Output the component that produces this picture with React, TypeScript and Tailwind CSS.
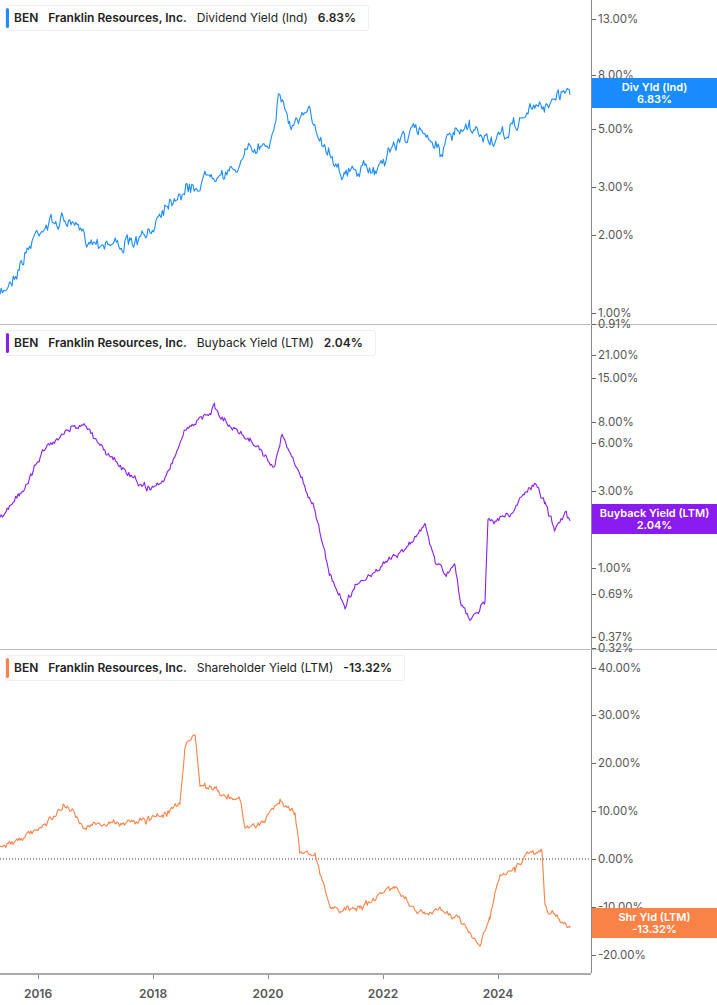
import React from "react";

type P = [number, number];
function rng(seed: number) {
  let s = seed;
  return () => {
    s = (s * 16807) % 2147483647;
    return s / 2147483647;
  };
}
function series(pts: P[], seed: number, amp: number, step: number) {
  const r = rng(seed);
  const out: string[] = [];
  let drift = 0;
  for (let i = 0; i < pts.length - 1; i++) {
    const [x0, y0] = pts[i];
    const [x1, y1] = pts[i + 1];
    for (let x = x0; x < x1; x += step) {
      const t = (x - x0) / (x1 - x0);
      drift = drift * 0.6 + (r() - 0.5) * amp;
      const j = (r() - 0.5) * amp * 0.6;
      out.push(`${x.toFixed(1)},${(y0 + (y1 - y0) * t + drift + j).toFixed(1)}`);
    }
  }
  const l = pts[pts.length - 1];
  out.push(`${l[0]},${l[1]}`);
  return out.join(" ");
}

const p1: P[] = [[0,297],[20,265],[38,230],[45,225],[65,220],[90,240],[130,245],[150,235],[160,210],[175,195],[200,185],[210,170],[230,175],[245,155],[270,140],[280,92],[290,125],[310,115],[325,145],[345,175],[360,170],[375,170],[390,150],[405,135],[425,130],[440,150],[455,135],[470,130],[490,140],[500,140],[510,130],[530,110],[545,105],[560,95],[568,85],[570,95]];
const p2: P[] = [[0,520],[20,495],[40,455],[65,430],[85,425],[100,445],[130,475],[150,490],[165,480],[185,430],[200,420],[215,408],[230,425],[250,440],[275,465],[282,435],[295,465],[315,510],[330,575],[345,605],[355,585],[370,575],[390,560],[410,545],[425,525],[435,560],[445,575],[455,565],[460,600],[470,620],[485,600],[488,520],[510,515],[525,495],[535,485],[545,505],[555,530],[565,515],[570,520]].map(([x,y])=>[x,y-325] as P);
const p3: P[] = [[0,848],[20,840],[50,820],[65,805],[85,825],[110,825],[150,820],[180,805],[185,745],[195,733],[200,785],[215,790],[240,800],[245,830],[265,820],[280,800],[295,815],[300,852],[315,855],[330,910],[360,910],[385,890],[395,885],[410,905],[425,915],[440,910],[460,920],[480,945],[490,915],[500,875],[515,870],[528,852],[542,852],[545,910],[560,918],[570,928]].map(([x,y])=>[x,y-650] as P);

function Panel(props: {
  h: string; color: string; pts: P[]; seed: number; amp: number; step: number;
  metric: string; value: string; ticks: [string, number][]; badge: [string, string, number];
  zero?: number; last?: boolean;
}) {
  return (
    <div className={`relative flex ${props.h} ${props.last ? "" : "border-b border-[#bbb]"}`}>
      <div className="relative w-[591px] h-full">
        <svg className="absolute inset-0" width="591" height="100%">
          {props.zero !== undefined && (
            <line x1="0" x2="591" y1={props.zero} y2={props.zero} stroke="#333" strokeDasharray="1 2" />
          )}
          <polyline points={series(props.pts, props.seed, props.amp, props.step)} fill="none" stroke={props.color} strokeWidth="1.1" strokeLinejoin="round" />
        </svg>
        <div className="absolute left-[5px] top-[5px] flex items-center gap-[10px] h-[26px] pl-[8px] pr-[12px] bg-white border border-[#eee] rounded-[3px] text-[12px] text-[#222]">
          <div className="absolute left-0 top-[2px] bottom-[2px] w-[3px] rounded" style={{ background: props.color }} />
          <span className="font-semibold">BEN</span>
          <span className="font-semibold">Franklin Resources, Inc.</span>
          <span>{props.metric}</span>
          <span className="font-semibold">{props.value}</span>
        </div>
      </div>
      <div className="relative flex-1 border-l border-[#888]">
        {props.ticks.map(([t, y]) => (
          <div key={t} className="absolute left-0 flex items-center text-[11.5px] text-[#555]" style={{ top: y - 8 }}>
            <span className="w-[4px] h-px bg-[#666] mr-[2px]" />
            {t}
          </div>
        ))}
        <div className="absolute left-0 right-0 flex flex-col items-center justify-center h-[30px] text-white text-[11px] font-semibold leading-[12px]" style={{ top: props.badge[2], background: props.color }}>
          <span>{props.badge[0]}</span>
          <span>{props.badge[1]}</span>
        </div>
      </div>
    </div>
  );
}

export default function App() {
  return (
    <div className="w-[717px] h-[1005px] bg-white overflow-hidden" style={{ fontFamily: "Inter, 'Liberation Sans', sans-serif" }}>
      <Panel h="h-[325px]" color="#1a8cff" pts={p1} seed={7} amp={10} step={1.2} metric="Dividend Yield (Ind)" value="6.83%"
        ticks={[["13.00%",19],["8.00%",75],["7.00%",89],["5.00%",129],["3.00%",187],["2.00%",235],["1.00%",313]]}
        badge={["Div Yld (Ind)","6.83%",78]} />
      <Panel h="h-[325px]" color="#8a1cf0" pts={p2} seed={11} amp={5} step={1.2} metric="Buyback Yield (LTM)" value="2.04%"
        ticks={[["0.91%",-1],["21.00%",30],["15.00%",53],["8.00%",97],["6.00%",118],["3.00%",166],["1.00%",243],["0.69%",269],["0.37%",312]]}
        badge={["Buyback Yield (LTM)","2.04%",179]} />
      <Panel h="h-[323px]" color="#f98246" pts={p3} seed={5} amp={5} step={1.2} metric="Shareholder Yield (LTM)" value="-13.32%"
        ticks={[["0.32%",-2],["40.00%",18],["30.00%",65],["20.00%",113],["10.00%",161],["0.00%",209],["-10.00%",257],["-20.00%",305]]}
        badge={["Shr Yld (LTM)","-13.32%",258]} zero={209} last />
      <div className="relative h-[32px] w-[591px] border-t-2 border-[#aaa]">
        {[["2016",38],["2018",153],["2020",268],["2022",383],["2024",498]].map(([t, x]) => (
          <div key={t as string} className="absolute top-0 flex flex-col items-center" style={{ left: (x as number) - 20, width: 40 }}>
            <span className="w-px h-[4px] bg-[#888]" />
            <span className="mt-[6px] text-[12px] font-semibold text-[#555]">{t}</span>
          </div>
        ))}
      </div>
    </div>
  );
}
